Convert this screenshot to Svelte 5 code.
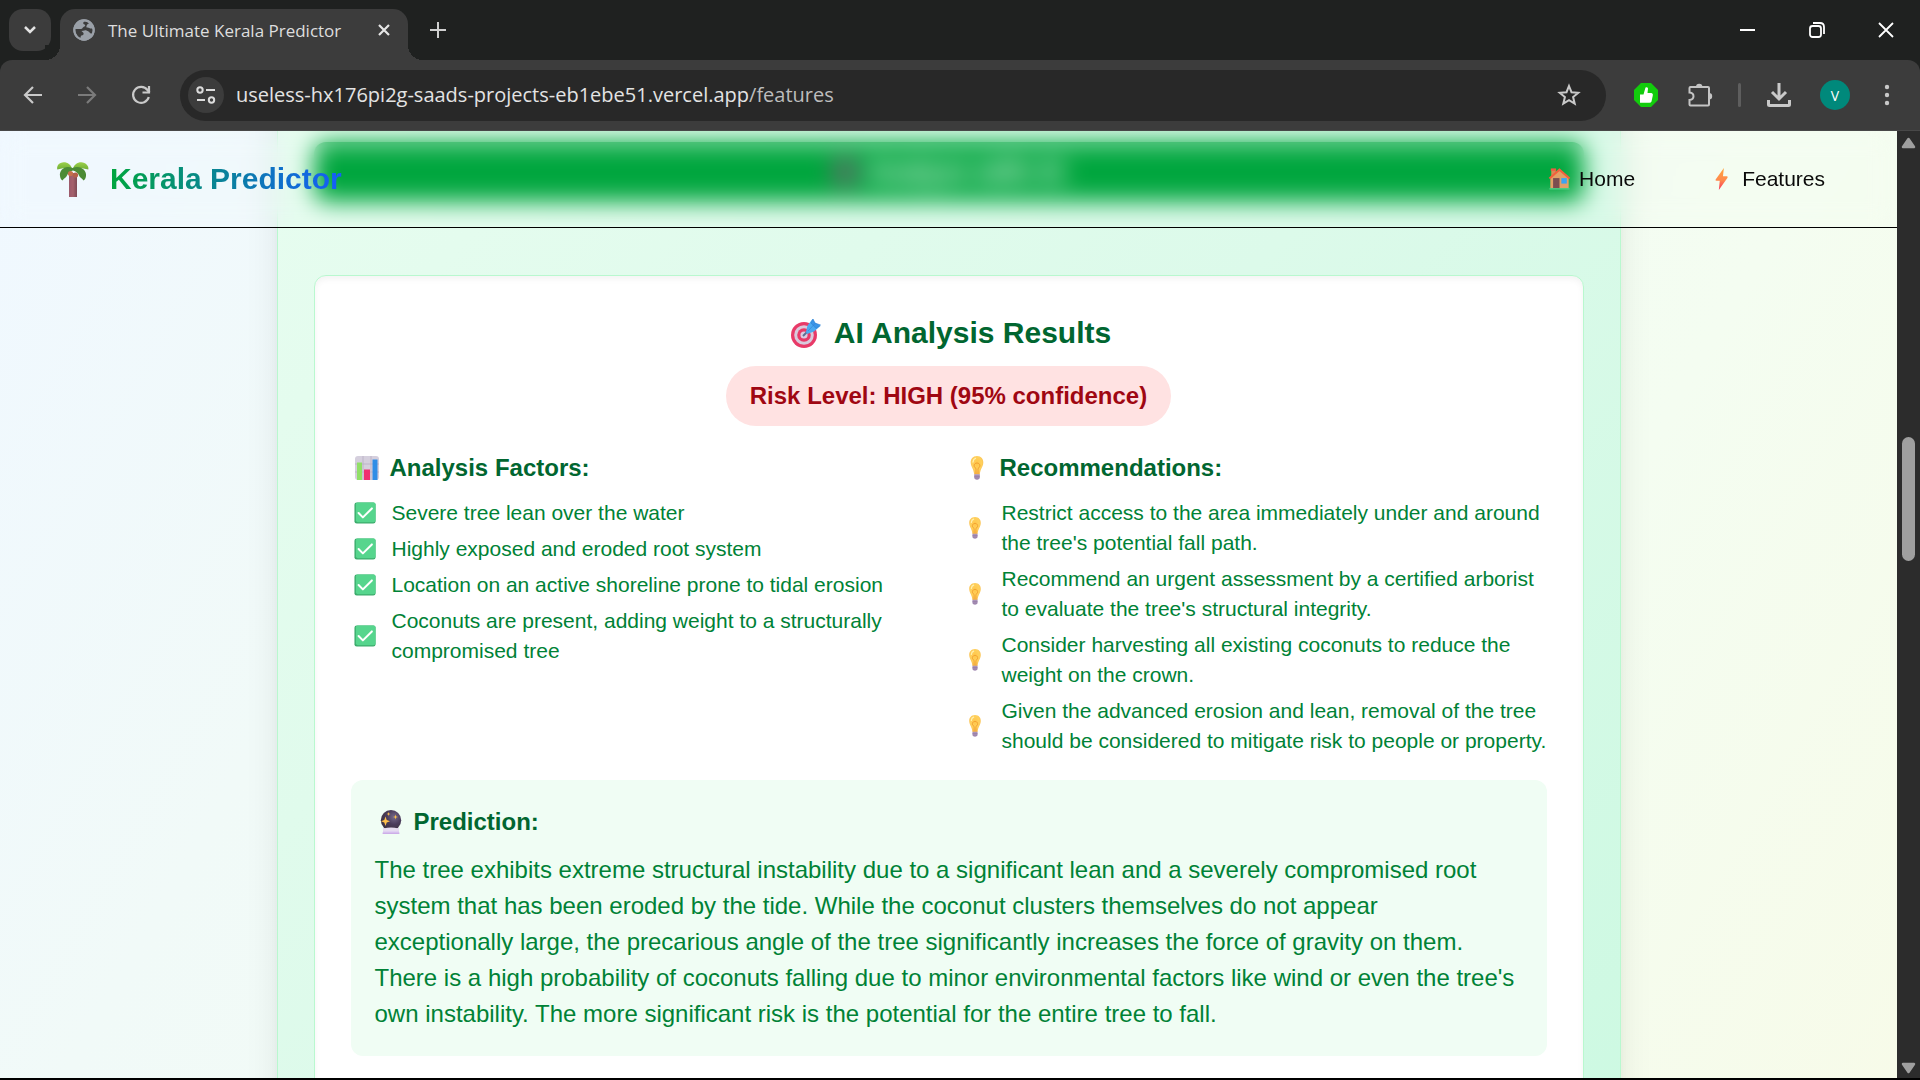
<script>
  const factors = [
    'Severe tree lean over the water',
    'Highly exposed and eroded root system',
    'Location on an active shoreline prone to tidal erosion',
    'Coconuts are present, adding weight to a structurally compromised tree'
  ];
  const recommendations = [
    'Restrict access to the area immediately under and around the tree\'s potential fall path.',
    'Recommend an urgent assessment by a certified arborist to evaluate the tree\'s structural integrity.',
    'Consider harvesting all existing coconuts to reduce the weight on the crown.',
    'Given the advanced erosion and lean, removal of the tree should be considered to mitigate risk to people or property.'
  ];
</script>

{#snippet bulb()}
  <svg class="emoji" viewBox="0 0 24 24" aria-hidden="true">
    <path d="M12 0C7.800 0 5.500 3.200 5.700 6.800C5.900 11 8.700 12.500 9.200 18.500H14.800C15.300 12.500 18.100 11 18.300 6.800C18.500 3.200 16.200 0 12 0Z" fill="url(#bulbGlass)" />
    <path d="M11 18V12.500C7.800 10.500 9 7 12 7S16.200 10.500 13 12.500V18" fill="none" stroke="#f09b2c" stroke-width="0.900" />
    <path d="M8 6C8.200 4 9 2.800 10.500 2.300" fill="none" stroke="#fff0b0" stroke-width="1.300" stroke-linecap="round" />
    <path d="M9.200 18.300H14.800V21.500C14.800 22.300 14 22.500 13.600 23.300C13.400 24 10.600 24 10.400 23.300C10 22.500 9.200 22.300 9.200 21.500Z" fill="#ab94ba" />
    <path d="M9.200 20.300H14.800M9.400 22H14.600" stroke="#8a7099" stroke-width="0.600" />
  </svg>
{/snippet}

{#snippet check()}
  <svg class="emoji" viewBox="0 0 24 24" aria-hidden="true">
    <rect x="0.500" y="0.500" width="23" height="23" rx="2.500" fill="#3cab6c" />
    <rect x="2" y="0.500" width="21.500" height="21.500" rx="2" fill="#56d58d" />
    <path d="M5 12L9.700 16.800L19.500 7" fill="none" stroke="#fff" stroke-width="2.200" stroke-linecap="round" stroke-linejoin="round" />
  </svg>
{/snippet}

<svg class="defs" width="0" height="0" aria-hidden="true">
  <defs>
    <radialGradient id="bulbGlass" cx="0.5" cy="0.4" r="0.6">
      <stop offset="0" stop-color="#ffc64a" /><stop offset="0.6" stop-color="#ffd05c" /><stop offset="1" stop-color="#f7bd55" />
    </radialGradient>
    <linearGradient id="boltFill" x1="0" y1="0" x2="0" y2="1">
      <stop offset="0" stop-color="#ffa53c" /><stop offset="0.55" stop-color="#ff8a4c" /><stop offset="1" stop-color="#f8355e" />
    </linearGradient>
    <linearGradient id="trunkFill" x1="0" y1="0" x2="1" y2="0">
      <stop offset="0" stop-color="#9c5a6c" /><stop offset="0.5" stop-color="#a5616c" /><stop offset="1" stop-color="#7d4a56" />
    </linearGradient>
    <linearGradient id="leafFill" x1="0" y1="0" x2="0" y2="1">
      <stop offset="0" stop-color="#9bd04a" /><stop offset="1" stop-color="#6fae34" />
    </linearGradient>
    <radialGradient id="orbFill" cx="0.65" cy="0.35" r="0.7">
      <stop offset="0" stop-color="#75688a" /><stop offset="0.5" stop-color="#4b3c5c" /><stop offset="1" stop-color="#3d3240" />
    </radialGradient>
  </defs>
</svg>

<div class="window">
  <div class="tabstrip">
    <button class="tab-search" aria-label="Search tabs">
      <svg width="14" height="10" viewBox="0 0 14 10"><path d="M2 2L7 7L12 2" fill="none" stroke="#e3e3e3" stroke-width="2.500" /></svg>
    </button>
    <div class="tab">
      <svg width="22" height="22" viewBox="0 0 22 22" aria-hidden="true">
        <circle cx="11" cy="11" r="10.700" fill="#9aa0a8" />
        <path d="M11.500 2.500C9.500 3.500 10 5 11.500 5.500C13 6 12 7.500 10.500 8C9.500 8.500 9.500 10 8 10L2.300 10C2 14 4 17.500 7 19C8 18.500 7.500 16.500 8.500 16.500C10 16.500 11 15.500 10.500 14C10.200 13 9 13 8.500 12L11.500 11.500C13 11 14 12 15.500 12.500C17 13 16 14.500 19 14.500C20 12.500 20 10.500 19 9.500C17 10 16 8.500 14.500 8.500C12.500 9 13.500 5 16 4.500C14.500 3 13 2.500 11.500 2.500Z" fill="#3c3c3c" />
        <circle cx="11" cy="11" r="9.700" fill="none" stroke="#9aa0a8" stroke-width="2" />
      </svg>
      <span class="tab-title">The Ultimate Kerala Predictor</span>
      <button class="bare" aria-label="Close tab">
        <svg width="14" height="14" viewBox="0 0 14 14"><path d="M2 2L12 12M12 2L2 12" stroke="#e6e6e6" stroke-width="2.200" /></svg>
      </button>
    </div>
    <button class="bare new-tab" aria-label="New tab">
      <svg width="16" height="16" viewBox="0 0 16 16"><path d="M8 0V16M0 8H16" stroke="#d0d0d0" stroke-width="2" /></svg>
    </button>
    <div class="window-controls">
      <button class="bare" aria-label="Minimize"><svg width="16" height="16" viewBox="0 0 16 16"><path d="M0 8H15" stroke="#fff" stroke-width="2" /></svg></button>
      <button class="bare" aria-label="Restore"><svg width="16" height="16" viewBox="0 0 16 16"><rect x="1" y="4" width="11" height="11" rx="2.500" fill="none" stroke="#fff" stroke-width="1.800" /><path d="M4 1H11C13.500 1 15 2.500 15 5V12" fill="none" stroke="#fff" stroke-width="1.800" /></svg></button>
      <button class="bare" aria-label="Close"><svg width="16" height="16" viewBox="0 0 16 16"><path d="M1 1L15 15M15 1L1 15" stroke="#fff" stroke-width="1.800" /></svg></button>
    </div>
  </div>

  <div class="toolbar">
    <div class="history">
      <button class="bare" aria-label="Back"><svg width="20" height="20" viewBox="0 0 20 20"><path d="M19 10H2.500M10 2L2 10L10 18" fill="none" stroke="#c9c9c9" stroke-width="2.200" /></svg></button>
      <button class="bare" aria-label="Forward" disabled><svg width="20" height="20" viewBox="0 0 20 20"><path d="M1 10H17.500M10 2L18 10L10 18" fill="none" stroke="#7b7b7b" stroke-width="2.200" /></svg></button>
      <button class="bare" aria-label="Reload"><svg width="20" height="20" viewBox="0 0 20 20"><path d="M17.800 12A8 8 0 1 1 16.500 5L18.500 7.500" fill="none" stroke="#c9c9c9" stroke-width="2.200" /><path d="M18 1V7.500H11.500" fill="none" stroke="#c9c9c9" stroke-width="2.200" /></svg></button>
    </div>
    <div class="address">
      <button class="site-info" aria-label="View site information">
        <svg width="20" height="18" viewBox="0 0 20 18"><g fill="none" stroke="#dcdcdc" stroke-width="2"><circle cx="4" cy="4" r="2.700" /><path d="M10 4H19M1 14H9" /><circle cx="15.500" cy="14" r="2.700" /></g></svg>
      </button>
      <span class="url">useless-hx176pi2g-saads-projects-eb1ebe51.vercel.app<span class="path">/features</span></span>
      <button class="bare star" aria-label="Bookmark this tab"><svg width="24" height="24" viewBox="0 0 24 24"><path d="M12 3L14.500 9.200L21.300 9.700L16.100 14.100L17.700 20.700L12 17.200L6.300 20.700L7.900 14.100L2.700 9.700L9.500 9.200Z" fill="none" stroke="#c9c9c9" stroke-width="2" /></svg></button>
    </div>
    <div class="extensions">
      <button class="bare" aria-label="Extension"><svg width="26" height="26" viewBox="0 0 26 26"><path d="M8 1H18L25 8V18L18 25H8L1 18V8Z" fill="#12cc0c" /><path d="M7 12.500H10.500L12.500 5.500Q14.500 4.500 15 6.500L14.500 11H18.500Q20.500 11.500 19.800 13.500L18.500 19.500Q18 20.800 16.500 20.800H7Z" fill="#fff" /></svg></button>
      <button class="bare" aria-label="Extensions"><svg width="26" height="26" viewBox="0 0 26 26"><path d="M3.500 5H21Q22 5 22 6V22.500Q22 23.500 21 23.500H3.500Q2.500 23.500 2.500 22.500V18Q6.500 17.500 6.500 14.200T2.500 10.500V6Q2.500 5 3.500 5Z" fill="none" stroke="#c4c4c4" stroke-width="2" /><path d="M9 5A3.200 3.200 0 0 1 15.400 5ZM22 11A3.200 3.200 0 0 1 22 17.400Z" fill="#c4c4c4" /></svg></button>
      <span class="divider"></span>
      <button class="bare" aria-label="Downloads"><svg width="26" height="26" viewBox="0 0 26 26"><path d="M13 1V16M6 10L13 17L20 10" fill="none" stroke="#c9c9c9" stroke-width="3" /><path d="M2.500 18V22.500Q2.500 23.500 3.500 23.500H22.500Q23.500 23.500 23.500 22.500V18" fill="none" stroke="#c9c9c9" stroke-width="3" /></svg></button>
      <button class="avatar" aria-label="Profile">V</button>
      <button class="bare menu" aria-label="Menu"><svg width="6" height="22" viewBox="0 0 6 22"><g fill="#c9c9c9"><circle cx="3" cy="3" r="2.200" /><circle cx="3" cy="11" r="2.200" /><circle cx="3" cy="19" r="2.200" /></g></svg></button>
    </div>
  </div>

  <div class="viewport">
    <div class="page">
      <header>
        <a class="brand" href="#home">
          <svg width="32" height="36" viewBox="0 0 32 36" aria-hidden="true">
            <path d="M12 12H20V36H12Z" fill="url(#trunkFill)" />
            <path d="M15.500 9C14 1 5 -1 1 4C0 6 0 7 0.300 8.500L7 7L15.500 9C17 1 26 -1 30 4C31.500 6 31.500 7 31.300 8.500L24 7Z" fill="url(#leafFill)" />
            <path d="M15.500 7C8 3.500 2 9 3 15C3.300 17 4 18.500 5.500 19.500C7 17 9 17 10 14.500C11 12 13 10.500 16 9.500C19 10.500 21 12 22 14.500C23 17 25 17 26.500 19.500C28 18.500 28.700 17 29 15C30 9 23 3.500 15.500 7Z" fill="#4c8b35" />
            <circle cx="13.500" cy="12.500" r="2.600" fill="#c4714d" /><circle cx="18.500" cy="14" r="2.600" fill="#b5604a" />
          </svg>
          <span>Kerala Predictor</span>
        </a>
        <nav>
          <a href="#home">
            <svg class="emoji nav-icon" viewBox="0 0 24 24" aria-hidden="true">
              <path d="M3 1H8V9H3Z" fill="#d98a55" /><path d="M2.500 0.500H8.300V3H2.500Z" fill="#ee5a42" />
              <path d="M2 11L12 2L22 11V22H2Z" fill="#e2a066" />
              <path d="M5 11H12V22H5Z" fill="#7b4e50" /><path d="M14 11H20V17H14Z" fill="#3aa4f2" />
              <path d="M1 11.500L12 1.800L23 11.500" fill="none" stroke="#f2603c" stroke-width="2.200" />
              <path d="M1 22H23V23.500H1Z" fill="#4fcf86" />
            </svg>
            Home
          </a>
          <a href="#features">
            <svg class="emoji nav-icon" viewBox="0 0 24 24" aria-hidden="true"><path d="M13.500 0L4.500 12.500Q4 14 5.500 14H9L8 24L17.500 10.500Q18 9 16.500 9H12.500Z" fill="url(#boltFill)" /></svg>
            Features
          </a>
        </nav>
      </header>

      <main class="card">
        <button class="analyze">
          <svg width="24" height="26" viewBox="0 0 24 26" aria-hidden="true"><rect x="1" y="1" width="22" height="24" rx="6" fill="#7a6676" /></svg>
          Analyze with AI
        </button>

        <section class="results">
          <h2>
            <svg width="30" height="30" viewBox="0 0 30 30" aria-hidden="true">
              <circle cx="13" cy="17" r="13" fill="#e83a68" /><circle cx="13" cy="17" r="9.800" fill="#d9c9dc" /><circle cx="13" cy="17" r="6.800" fill="#e83a68" /><circle cx="13" cy="17" r="3.600" fill="#dccbe0" />
              <path d="M12 18L18 12" stroke="#5d6f92" stroke-width="2" />
              <path d="M15 14L16.500 7.500L21.500 1L24 5L29.500 8L23 13.500L16 16Z" fill="#4baaf0" /><path d="M17 13L24 5.500M20 5L22 1L24 5L29.500 7L25 10.500Z" fill="#3996e8" stroke="#2f7fd2" stroke-width="0.600" />
            </svg>
            AI Analysis Results
          </h2>
          <p class="risk">Risk Level: HIGH (95% confidence)</p>

          <div class="columns">
            <div>
              <h3>
                <svg class="emoji" viewBox="0 0 24 24" aria-hidden="true">
                  <rect width="24" height="24" rx="3" fill="#d5cfdd" /><path d="M0 8H24M0 16H24M8 0V24M16 0V24" stroke="#b7aec4" stroke-width="0.800" />
                  <path d="M2 6.500H7V24H2Z" fill="#91df67" /><path d="M9 13.500H15V24H9Z" fill="#ef2e70" /><path d="M17.500 3.500H22.500V24H17.500Z" fill="#2f8de6" />
                </svg>
                Analysis Factors:
              </h3>
              <ul>
                {#each factors as text}
                  <li>{@render check()}<span>{text}</span></li>
                {/each}
              </ul>
            </div>
            <div>
              <h3>{@render bulb()} Recommendations:</h3>
              <ul>
                {#each recommendations as text}
                  <li>{@render bulb()}<span>{text}</span></li>
                {/each}
              </ul>
            </div>
          </div>

          <div class="prediction">
            <h3>
              <svg class="emoji" viewBox="0 0 24 24" aria-hidden="true">
                <path d="M4.500 17.500H19.500L20.300 24H3.700Z" fill="#e0d0f2" /><path d="M3.700 22.500H20.300V24H3.700Z" fill="#cdaee8" />
                <circle cx="12" cy="10.200" r="10.200" fill="url(#orbFill)" />
                <path d="M4.500 18.500Q12 16.500 19.500 18.500L20 21H4Z" fill="#e6dcf0" />
                <g fill="#ffc04a"><path d="M6.500 6.500L7.700 9.900L11 11.200L7.700 12.500L6.500 16L5.300 12.500L2 11.200L5.300 9.900Z" /><path d="M9.500 2L10 3.500L11.500 4L10 4.500L9.500 6L9 4.500L7.500 4L9 3.500Z" /><path d="M16.500 4.500L17.100 6.400L19 7L17.100 7.600L16.500 9.500L15.900 7.600L14 7L15.900 6.400Z" /></g>
              </svg>
              Prediction:
            </h3>
            <p>The tree exhibits extreme structural instability due to a significant lean and a severely compromised root system that has been eroded by the tide. While the coconut clusters themselves do not appear exceptionally large, the precarious angle of the tree significantly increases the force of gravity on them. There is a high probability of coconuts falling due to minor environmental factors like wind or even the tree's own instability. The more significant risk is the potential for the entire tree to fall.</p>
          </div>
        </section>
      </main>
    </div>

    <div class="scrollbar" aria-hidden="true">
      <svg width="15" height="12" viewBox="0 0 15 12"><path d="M7.500 2L13 10H2Z" fill="#9f9f9f" stroke="#9f9f9f" stroke-width="2.500" stroke-linejoin="round" /></svg>
      <div class="track"><div class="thumb"></div></div>
      <svg width="15" height="12" viewBox="0 0 15 12"><path d="M7.500 10L13 2H2Z" fill="#9f9f9f" stroke="#9f9f9f" stroke-width="2.500" stroke-linejoin="round" /></svg>
    </div>
  </div>
</div>

<style>
  :global(body) { margin: 0; background: #000; }
  * { box-sizing: border-box; }
  h2, h3, p, ul { margin: 0; padding: 0; }
  button { padding: 0; border: 0; font: inherit; color: inherit; }
  svg { display: block; flex: none; }
  .defs { position: absolute; }

  .window {
    display: flex;
    flex-direction: column;
    height: 100vh;
    border-bottom: 2px solid #000;
    background: #1f2120;
    font-family: "Liberation Sans", Arial, sans-serif;
  }
  .bare { display: grid; place-items: center; background: none; }

  .tabstrip {
    display: flex;
    flex: none;
    height: 60px;
    padding: 9px 18px 0 9px;
    background: #1f2120;
    font-family: "Open Sans", "Segoe UI", sans-serif;
  }
  .tab-search {
    display: grid;
    place-items: center;
    width: 42px;
    height: 42px;
    border-radius: 14px;
    background: #3c3c3c;
  }
  .tab {
    position: relative;
    display: flex;
    align-items: center;
    gap: 13px;
    width: 348px;
    margin-left: 9px;
    padding: 0 17px 9px 13px;
    border-radius: 15px 15px 0 0;
    background: #3c3c3c;
  }
  .tab::before, .tab::after {
    content: "";
    position: absolute;
    bottom: 0;
    width: 15px;
    height: 15px;
  }
  .tab::before { right: 100%; background: radial-gradient(circle at 0 0, #1f2120 15px, #3c3c3c 15px); }
  .tab::after { left: 100%; background: radial-gradient(circle at 100% 0, #1f2120 15px, #3c3c3c 15px); }
  .tab-title { flex: 1; padding-top: 2px; color: #dedede; font-size: 17px; line-height: 24px; white-space: nowrap; }
  .new-tab { width: 60px; height: 42px; }
  .window-controls { display: flex; gap: 53px; height: 42px; margin-left: auto; padding-right: 8px; }

  .toolbar {
    display: flex;
    flex: none;
    align-items: center;
    height: 71px;
    padding: 0 30px 0 23px;
    border-bottom: 1px solid #484848;
    border-radius: 12px 12px 0 0;
    background: #3c3c3c;
    font-family: "Open Sans", "Segoe UI", sans-serif;
  }
  .history { display: flex; gap: 34px; padding-right: 29px; }
  .address {
    display: flex;
    flex: 1;
    align-items: center;
    height: 51px;
    padding: 0 25px 0 8px;
    border-radius: 26px;
    background: #282828;
  }
  .site-info { display: grid; place-items: center; width: 36px; height: 36px; border-radius: 50%; background: #3c3c3c; }
  .url { flex: 1; padding-left: 12px; color: #e3e3e3; font-size: 20px; line-height: 28px; }
  .path { color: #bdbdbd; }
  .extensions { display: flex; align-items: center; padding-left: 27px; gap: 28px; }
  .divider { width: 3px; height: 24px; margin: 0 -3px; border-radius: 2px; background: #5e5e5e; }
  .menu { margin-left: 6px; }
  .avatar { width: 30px; height: 30px; border-radius: 50%; background: #00897b; color: #fff; font-size: 14px; }

  .viewport { display: flex; flex: 1; min-height: 0; }
  .page {
    position: relative;
    flex: 1;
    overflow: hidden;
    background: linear-gradient(120deg, #f0f8ff 0%, #f1faf8 25%, #f4fdf1 75%, #f7fbe9 100%);
  }
  header {
    position: absolute;
    z-index: 1;
    inset: 0 0 auto 0;
    display: flex;
    align-items: center;
    justify-content: space-between;
    height: 97px;
    padding: 0 72px 0 57px;
    border-bottom: 1px solid #000;
    backdrop-filter: blur(12px);
  }
  .brand { display: flex; align-items: center; gap: 21px; font-size: 30px; font-weight: 700; line-height: 42px; text-decoration: none; }
  .brand span {
    background: linear-gradient(to right, #00a63e, #155dfc);
    background-clip: text;
    color: transparent;
  }
  nav { display: flex; gap: 76px; }
  nav a { display: flex; align-items: center; gap: 8px; color: #0a0a0a; font-size: 21px; line-height: 30px; text-decoration: none; }
  nav .nav-icon { width: 23px; height: 22px; margin: 0; }

  .card {
    max-width: 1344px;
    margin: -120px auto 0;
    padding: 130px 36px 36px;
    border: 1px solid #b9f8cf;
    background: linear-gradient(135deg, #e8fdf0, #dcfaea 50%, #cdf9e2);
    box-shadow: 0 30px 38px -8px rgba(0, 0, 0, 0.12), 0 12px 15px -9px rgba(0, 0, 0, 0.1);
  }
  .analyze {
    display: flex;
    align-items: center;
    justify-content: center;
    gap: 10px;
    width: 100%;
    height: 60px;
    border-radius: 12px;
    background: #00a63e;
    color: #fff;
    font-size: 27px;
    font-weight: 700;
  }
  .results {
    display: flex;
    flex-direction: column;
    align-items: center;
    margin-top: 73px;
    padding: 36px;
    border: 1px solid #b9f8cf;
    border-radius: 12px;
    background: #fff;
    box-shadow: inset 0 3px 6px rgba(0, 0, 0, 0.05);
    color: #008236;
  }
  h2, h3 { display: flex; align-items: center; color: #016630; font-weight: 700; }
  h2 { gap: 13px; padding-left: 5px; font-size: 30px; line-height: 42px; }
  .risk {
    margin: 12px 0 24px;
    padding: 12px 24px;
    border-radius: 30px;
    background: #ffe2e2;
    color: #9f0712;
    font-size: 24px;
    font-weight: 700;
    line-height: 36px;
  }
  .columns { display: grid; grid-template-columns: 1fr 1fr; gap: 24px; width: 100%; }
  .emoji { width: 24px; height: 24px; margin: 0 11px 0 4px; }
  h3 { font-size: 24px; line-height: 36px; }
  ul { display: grid; gap: 6px; margin-top: 12px; list-style: none; }
  li { display: flex; align-items: center; font-size: 21px; line-height: 30px; }
  li .emoji { width: 22px; height: 22px; margin: 0 16px 0 3px; }
  .prediction { width: 100%; margin-top: 24px; padding: 24px; border-radius: 12px; background: #f0fdf4; }
  .prediction p { margin-top: 12px; font-size: 24px; line-height: 36px; }

  .scrollbar {
    display: flex;
    flex-direction: column;
    align-items: center;
    width: 23px;
    padding: 6px 0 4px;
    background: #2c2c2c;
  }
  .track { flex: 1; width: 13px; padding-top: 288px; }
  .thumb { height: 124px; border-radius: 7px; background: #9f9f9f; }
</style>
